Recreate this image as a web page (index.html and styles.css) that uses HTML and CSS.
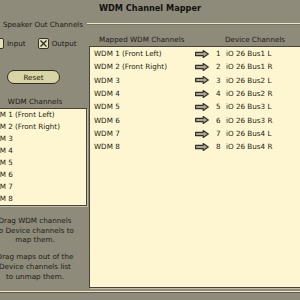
FILE: index.html
```html
<!DOCTYPE html>
<html lang="en">
<head>
    <meta charset="UTF-8">
    <title>WDM Channel Mapper</title>
    <link rel="stylesheet" href="styles.css">
</head>
<body>
    <div class="window">
        <h1 class="title">WDM Channel Mapper</h1>

        <div class="group-head">
            <span>Speaker Out Channels</span>
            <i class="rule"></i>
        </div>

        <div class="main">
            <aside class="side">
                <div class="checks">
                    <label class="check">
                        <span class="box"></span>
                        <span>Input</span>
                    </label>
                    <label class="check">
                        <span class="box">
                            <svg width="9" height="9" viewBox="0 0 9 9"><path d="M1.5 1.5 L7.5 7.5 M7.5 1.5 L1.5 7.5" stroke="#2a2922" stroke-width="1.3" fill="none"/></svg>
                        </span>
                        <span>Output</span>
                    </label>
                </div>

                <button class="reset">Reset</button>

                <div class="side-label">WDM Channels</div>
                <ul class="list">
                    <li>WDM 1 (Front Left)</li>
                    <li>WDM 2 (Front Right)</li>
                    <li>WDM 3</li>
                    <li>WDM 4</li>
                    <li>WDM 5</li>
                    <li>WDM 6</li>
                    <li>WDM 7</li>
                    <li>WDM 8</li>
                </ul>

                <p class="hint">Drag WDM channels<br>to Device channels to<br>map them.</p>
                <p class="hint">Drag maps out of the<br>Device channels list<br>to unmap them.</p>
            </aside>

            <section class="map">
                <div class="map-head">
                    <span>Mapped WDM Channels</span>
                    <span>Device Channels</span>
                </div>
                <div class="map-box" id="map-box"></div>
            </section>
        </div>

        <div class="footer-rule"></div>
    </div>

    <script>
        const names = ['WDM 1 (Front Left)', 'WDM 2 (Front Right)', 'WDM 3', 'WDM 4', 'WDM 5', 'WDM 6', 'WDM 7', 'WDM 8'];
        const devices = ['iO 26 Bus1 L', 'iO 26 Bus1 R', 'iO 26 Bus2 L', 'iO 26 Bus2 R', 'iO 26 Bus3 L', 'iO 26 Bus3 R', 'iO 26 Bus4 L', 'iO 26 Bus4 R'];
        const arrow = '<svg width="14" height="8" viewBox="0 0 14 8"><path d="M0.6 2.3 H8.2 V0.6 L13.3 4 L8.2 7.4 V5.7 H0.6 Z" fill="#a8a595" stroke="#33322b" stroke-width="1.2" stroke-linejoin="round"/></svg>';

        document.getElementById('map-box').innerHTML = names.map((name, i) => `
            <div class="map-row">
                <span>${name}</span>
                <span class="arrow">${arrow}</span>
                <span>${i + 1}</span>
                <span>${devices[i]}</span>
            </div>
        `).join('');
    </script>
</body>
</html>
```

FILE: styles.css
```css
:root {
    --bg: #8e8b7a;
    --cream: #fdf6d0;
    --text: #1c1b16;
    --edge: #47453b;
    --light-line: #ebe6c8;
}

body {
    margin: 0;
    width: 300px;
    height: 300px;
    overflow: hidden;
    background: var(--bg);
    color: var(--text);
    font-family: "DejaVu Sans", Verdana, sans-serif;
    font-size: 7.2px;
}

.title {
    margin: 0;
    font-size: 8.2px;
    font-weight: bold;
    line-height: 17px;
    text-align: center;
    color: #121210;
}

.group-head {
    display: flex;
    align-items: center;
    gap: 4px;
    height: 14px;
    padding-left: 3px;
}

.group-head .rule {
    flex: 1;
    height: 1px;
    background: var(--light-line);
    border-bottom: 1px solid #76735f;
}

.main {
    display: flex;
    gap: 2px;
    height: 257px;
}

.side {
    flex: none;
    width: 104px;
    margin-left: -17px;
    display: flex;
    flex-direction: column;
}

.checks {
    display: flex;
    align-items: center;
    margin-top: 6px;
    padding-left: 10px;
    line-height: 13px;
}

.check {
    display: flex;
    align-items: center;
    gap: 3px;
}

.check + .check {
    margin-left: 12px;
}

.box {
    display: flex;
    align-items: center;
    justify-content: center;
    width: 11px;
    height: 11px;
    box-sizing: border-box;
    border: 1px solid #34332b;
    border-radius: 2px;
    background: #e3dfb9;
}

.reset {
    align-self: flex-start;
    margin: 20px 0 0 24px;
    width: 53px;
    height: 14px;
    padding: 0;
    border: 1px solid #2e2d25;
    border-radius: 7px;
    background: #d9d4a3;
    color: var(--text);
    font: inherit;
}

.side-label {
    margin-top: 13px;
    line-height: 10px;
    text-align: center;
}

.list {
    margin: 1px 0 0;
    padding: 0 0 0 3px;
    list-style: none;
    background: var(--cream);
    border: 1px solid var(--edge);
    box-shadow: 1px 1px 0 #c2bda2;
}

.list li {
    height: 12px;
    line-height: 12px;
    white-space: nowrap;
}

.hint {
    margin: 10px 0 0;
    line-height: 9.7px;
    text-align: center;
}

.hint + .hint {
    margin-top: 7px;
}

.map {
    flex: 1;
    margin-right: -20px;
    display: flex;
    flex-direction: column;
}

.map-head {
    display: grid;
    grid-template-columns: 126px auto;
    padding: 4px 0 0 10px;
    line-height: 10px;
}

.map-box {
    flex: 1;
    margin-top: 1px;
    padding-left: 4px;
    background: var(--cream);
    border: 1px solid var(--edge);
    box-shadow: 1px 1px 0 #c2bda2;
}

.map-row {
    display: grid;
    grid-template-columns: 101px 21px 10px auto;
    align-items: center;
    height: 13.33px;
    white-space: nowrap;
}

.arrow {
    display: flex;
    align-items: center;
}

.footer-rule {
    margin-top: 3px;
    height: 1px;
    background: var(--light-line);
    border-bottom: 1px solid #5f5c4f;
}
```
